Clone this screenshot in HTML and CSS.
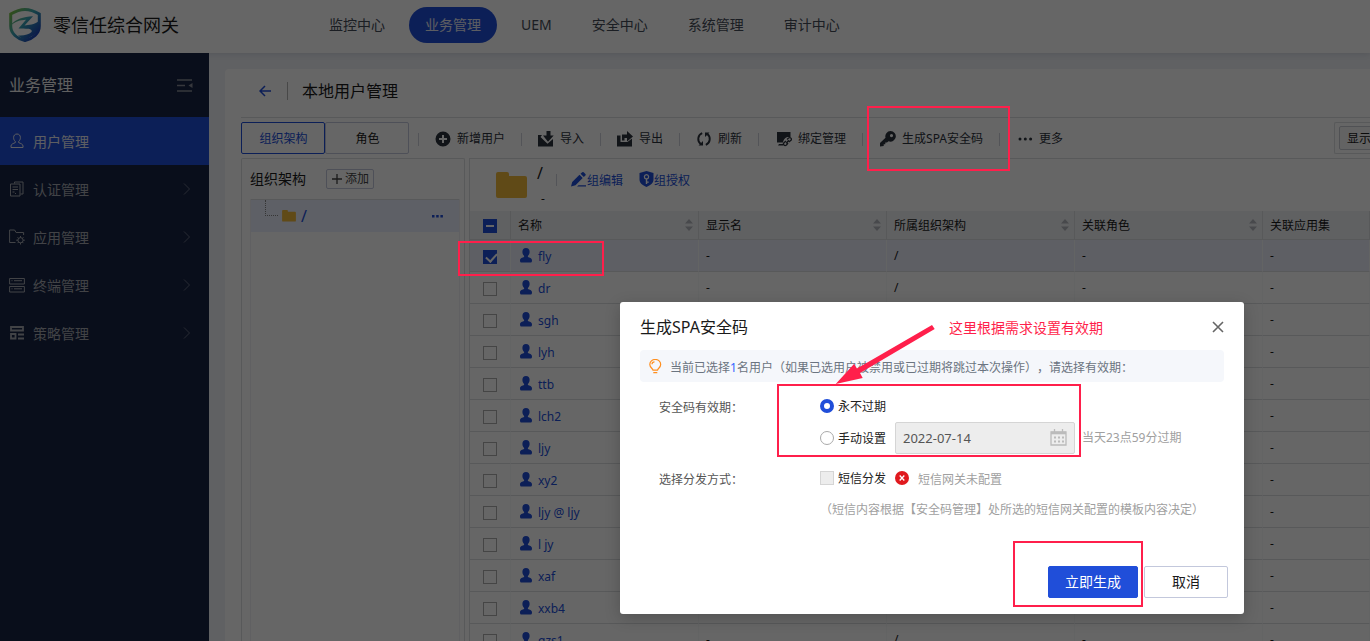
FILE: index.html
```html
<!DOCTYPE html>
<html lang="zh-CN">
<head>
<meta charset="utf-8">
<title>零信任综合网关</title>
<link rel="stylesheet" href="styles.css">
</head>
<body>
<svg class="sprite" aria-hidden="true">
  <symbol id="user" viewBox="0 0 12 15"><path d="M6 0a3.6 3.9 0 0 1 3.6 4c0 1.600-.8 3-1.700 3.900v1.200c1.600.7 4.100 1.200 4.100 3.300 0 1.600-.6 2.200-1.800 2.200H1.800C.6 14.600 0 14 0 12.400c0-2.100 2.500-2.600 4.100-3.300V7.900C3.200 7 2.400 5.600 2.400 4A3.600 3.900 0 0 1 6 0z"/></symbol>
  <symbol id="chev" viewBox="0 0 8 12"><path d="M1 .5 6.500 6 1 11.500" fill="none" stroke="currentColor"/></symbol>
  <symbol id="sort" viewBox="0 0 8 12"><path d="M0 4.500 4 0l4 4.500zM0 7.500h8L4 12z"/></symbol>
  <symbol id="folder" viewBox="0 0 31 27"><path d="M2 0h9q2 0 2 2v2h16q2 0 2 2v18q0 2-2 2H2q-2 0-2-2V2q0-2 2-2z"/></symbol>
</svg>

<div class="app">
  <header class="topbar">
    <svg class="logo" viewBox="0 0 34 36">
      <defs><linearGradient id="lg" gradientUnits="userSpaceOnUse" x1="3" y1="5" x2="29" y2="29"><stop offset="0" stop-color="#7cc243"/><stop offset=".45" stop-color="#3aa6b4"/><stop offset="1" stop-color="#1a3fb8"/></linearGradient></defs>
      <path d="M17 2.500C12 2.500 7 4.500 2.700 7v12c0 7.500 6.500 12.500 14.300 14.500C24.800 31.500 31.300 26.500 31.300 19V7C27 4.500 22 2.500 17 2.500z" fill="#fff" stroke="url(#lg)" stroke-width="3"/>
      <path d="M3 17.500C8 12.300 15 9.500 25 9.200L16.500 18.500C21 18 26 17.800 31 14v8c-2.500 5-8 8.500-14 10.500-3-1-5-2-7-4 6 .5 11-1 13.500-3.500 1-2-1.500-3-3.500-3.200-3-.3-6-.3-9.500-.3L18 12.800C12 13 7 14.500 3 18.500z" fill="url(#lg)"/>
    </svg>
    <h1 class="brand">零信任综合网关</h1>
    <nav class="topnav">
      <a href="#">监控中心</a><a href="#" class="on">业务管理</a><a href="#">UEM</a><a href="#">安全中心</a><a href="#">系统管理</a><a href="#">审计中心</a>
    </nav>
  </header>

  <aside class="side">
    <div class="side-head"><h2>业务管理</h2>
      <button class="plain" aria-label="收起菜单"><svg width="16" height="13" viewBox="0 0 16 13" fill="none" stroke="currentColor" stroke-width="1.400"><path d="M0 1h15M0 6.500h8M0 12h15"/><path d="m15.500 4-4 2.500 4 2.500z" fill="currentColor" stroke="none"/></svg></button>
    </div>
    <nav>
      <a href="#" class="on"><svg viewBox="0 0 16 16"><path d="M8 1C5.800 1 4.600 2.600 4.600 4.500c0 1.700.6 3 1.700 3.900v1.200C4.500 10.500 2 11 2 13v1.500h12V13c0-2-2.500-2.500-4.300-3.400V8.400c1.100-.9 1.700-2.200 1.700-3.900C11.400 2.600 10.200 1 8 1z"/></svg><span>用户管理</span></a>
      <a href="#"><svg viewBox="0 0 16 16"><path d="M5.500 2.500V1H14v12h-2.500M1.500 3h9.500v12H1.500zM3.500 6h5.500M3.500 8.500h5.500M3.500 11h2"/><path d="M6 12.500h1"/></svg><span>认证管理</span><svg class="chev"><use href="#chev"/></svg></a>
      <a href="#"><svg viewBox="0 0 16 16"><path d="M6.500 13.500H.6V1h5l1.500 2.500h7.500V6"/><circle cx="11.500" cy="11.200" r="2.600"/><path d="M11.500 7v1.600M11.500 13.800v1.700M7.200 11.200h1.700M14.100 11.200h1.700M8.600 8.300l1 1M13.400 13.100l1 1M14.400 8.300l-1 1M9.600 13.100l-1 1"/></svg><span>应用管理</span><svg class="chev"><use href="#chev"/></svg></a>
      <a href="#"><svg viewBox="0 0 16 16"><path d="M.6 1.500h14.800v5.500H.6zM.6 9.500h14.800V15H.6zM2.500 3.700h1M5 3.700h8M2.500 11.800h1M5 11.800h8"/></svg><span>终端管理</span><svg class="chev"><use href="#chev"/></svg></a>
      <a href="#"><svg viewBox="0 0 16 16" stroke-width="1.800"><path d="M2 2h12v3.500H2zM2 9h4.500v4.500H2zM9 9.500h6M9 13.500h6"/></svg><span>策略管理</span><svg class="chev"><use href="#chev"/></svg></a>
    </nav>
  </aside>

  <main class="main">
    <section class="card">
      <div class="card-head">
        <button class="plain back" aria-label="返回"><svg width="12" height="12" viewBox="0 0 12 12" fill="none" stroke="currentColor" stroke-width="1.500"><path d="M6 1 1 6l5 5M1 6h11"/></svg></button>
        <h2>本地用户管理</h2>
      </div>
      <div class="bar">
        <div class="tabs"><button class="on">组织架构</button><button>角色</button></div>
        <div class="tools">
          <button><svg viewBox="0 0 16 16"><path fill-rule="evenodd" d="M8 .5a7.500 7.500 0 1 1 0 15 7.500 7.500 0 0 1 0-15zM7 4v3H4v2h3v3h2V9h3V7H9V4z"/></svg>新增用户</button>
          <button><svg viewBox="0 0 16 16"><path d="M0 4h4l-1.500 2L9.500 12.800 15 8v7.500H0z"/><path d="M8.500 0h4v4.500h3.200L10 10.800 5 4.500h3.500z"/></svg>导入</button>
          <button><svg viewBox="0 0 16 16"><path d="M0 4.500h3.500V11h7l4.500-3.500v8H0z"/><path d="M5 9.500V3.500h5V0l6 5.500-6 5V7H7.500v2.500z"/></svg>导出</button>
          <button><svg viewBox="0 0 16 16" fill="none"><g fill="none" stroke="currentColor" stroke-width="1.900"><path d="M6.200 2.200a6.200 6.200 0 0 0-1.500 10.700M9.800 13.800a6.200 6.200 0 0 0 1.500-10.700"/></g><path d="M2.500 14.500h4.500V10zM13.500 1.500H9V6z" fill="currentColor"/></svg>刷新</button>
          <button><svg viewBox="0 0 16 16"><path d="M1 1h13.500v5.300C10 5 7.500 8 7 11.500H1zM3 13h4v1.500H2z"/><path d="M11 8.500 12.500 7c2-1.200 3.600.7 2.500 2.300L12.800 11M12 12l-1.500 2c-2 1.500-4-.6-2.500-2.300L10 10M10.200 12.200l2.600-3" fill="none" stroke="currentColor" stroke-width="1.300"/></svg>绑定管理</button>
          <button><svg viewBox="0 0 16 16"><path fill-rule="evenodd" d="M10.500 0a5.300 5.300 0 1 1-2 10.200L7 11.500H5.300v1.700H3.700V15L0 15.500V12l5.500-5.300A5.300 5.300 0 0 1 10.500 0zm1 3a1.600 1.600 0 1 0 0 3.200 1.600 1.600 0 0 0 0-3.200z"/></svg>生成SPA安全码</button>
          <button><svg viewBox="0 0 16 16"><circle cx="3" cy="8" r="1.500"/><circle cx="8.300" cy="8" r="1.500"/><circle cx="13.600" cy="8" r="1.500"/></svg>更多</button>
        </div>
        <div class="show"><button>显示</button></div>
      </div>
      <div class="split">
        <section class="tree">
          <div class="tree-head"><h3>组织架构</h3><button><svg width="10" height="10" viewBox="0 0 10 10" stroke="currentColor" stroke-width="1.300"><path d="M5 0v10M0 5h10"/></svg>添加</button></div>
          <div class="tree-body"><div class="node"><i></i><svg class="folder small"><use href="#folder"/></svg><a href="#">/</a><button class="plain" aria-label="更多操作"><svg width="11" height="3" viewBox="0 0 11 3" fill="currentColor"><path d="M0 0h2.500v2.500H0zM4.200 0h2.500v2.500H4.200zM8.400 0h2.500v2.500H8.400z"/></svg></button></div></div>
        </section>
        <section class="list">
          <div class="group">
            <svg class="folder"><use href="#folder"/></svg>
            <div class="path"><span>/</span><small>-</small></div>
            <div class="links">
              <a href="#"><svg width="16" height="15" viewBox="0 0 16 15"><path d="M0 14.500 1.200 10 8.500 2.800l3.200 3.200-7.200 7.200zM9.500 1.800 11.200.3q.8-.6 1.500 0l1.700 1.700q.6.700 0 1.500l-1.600 1.500zM6 14.500l1.500-1.300H15v1.300z"/></svg><span>组编辑</span></a>
              <a href="#"><svg width="15" height="16" viewBox="0 0 15 16"><path fill-rule="evenodd" d="M7.500 0 14.500 2v6.500c0 3.500-3 5.700-7 7.500-4-1.800-7-4-7-7.500V2zM7.500 3a2.800 2.800 0 0 0-.7 5.500V13h1.400v-1.200h1.500v-1.300H8.200v-2A2.800 2.800 0 0 0 7.500 3zm0 1.300a1.500 1.500 0 1 1 0 3 1.500 1.500 0 0 1 0-3z"/></svg><span>组授权</span></a>
            </div>
          </div>
          <table>
            <colgroup><col class="c0"><col class="cx"><col class="cx"><col class="cx"><col class="cx"><col></colgroup>
            <thead><tr><th><input type="checkbox" class="some" aria-label="全选"></th><th>名称<svg class="sort"><use href="#sort"/></svg></th><th>显示名<svg class="sort"><use href="#sort"/></svg></th><th>所属组织架构<svg class="sort"><use href="#sort"/></svg></th><th>关联角色<svg class="sort"><use href="#sort"/></svg></th><th>关联应用集</th></tr></thead>
            <tbody>
              <tr class="sel"><td><input type="checkbox" checked aria-label="fly"></td><td><a href="#"><svg><use href="#user"/></svg>fly</a></td><td>-</td><td>/</td><td>-</td><td>-</td></tr>
              <tr><td><input type="checkbox" aria-label="dr"></td><td><a href="#"><svg><use href="#user"/></svg>dr</a></td><td>-</td><td>/</td><td>-</td><td>-</td></tr>
              <tr><td><input type="checkbox" aria-label="sgh"></td><td><a href="#"><svg><use href="#user"/></svg>sgh</a></td><td>-</td><td>/</td><td>-</td><td>-</td></tr>
              <tr><td><input type="checkbox" aria-label="lyh"></td><td><a href="#"><svg><use href="#user"/></svg>lyh</a></td><td>-</td><td>/</td><td>-</td><td>-</td></tr>
              <tr><td><input type="checkbox" aria-label="ttb"></td><td><a href="#"><svg><use href="#user"/></svg>ttb</a></td><td>-</td><td>/</td><td>-</td><td>-</td></tr>
              <tr><td><input type="checkbox" aria-label="lch2"></td><td><a href="#"><svg><use href="#user"/></svg>lch2</a></td><td>-</td><td>/</td><td>-</td><td>-</td></tr>
              <tr><td><input type="checkbox" aria-label="ljy"></td><td><a href="#"><svg><use href="#user"/></svg>ljy</a></td><td>-</td><td>/</td><td>-</td><td>-</td></tr>
              <tr><td><input type="checkbox" aria-label="xy2"></td><td><a href="#"><svg><use href="#user"/></svg>xy2</a></td><td>-</td><td>/</td><td>-</td><td>-</td></tr>
              <tr><td><input type="checkbox" aria-label="ljy @ ljy"></td><td><a href="#"><svg><use href="#user"/></svg>ljy @ ljy</a></td><td>-</td><td>/</td><td>-</td><td>-</td></tr>
              <tr><td><input type="checkbox" aria-label="l jy"></td><td><a href="#"><svg><use href="#user"/></svg>l jy</a></td><td>-</td><td>/</td><td>-</td><td>-</td></tr>
              <tr><td><input type="checkbox" aria-label="xaf"></td><td><a href="#"><svg><use href="#user"/></svg>xaf</a></td><td>-</td><td>/</td><td>-</td><td>-</td></tr>
              <tr><td><input type="checkbox" aria-label="xxb4"></td><td><a href="#"><svg><use href="#user"/></svg>xxb4</a></td><td>-</td><td>/</td><td>-</td><td>-</td></tr>
              <tr><td><input type="checkbox" aria-label="qzs1"></td><td><a href="#"><svg><use href="#user"/></svg>qzs1</a></td><td>-</td><td>/</td><td>-</td><td>-</td></tr>
            </tbody>
          </table>
        </section>
      </div>
    </section>
  </main>
</div>

<div class="mask"></div>

<div class="modal" role="dialog" aria-labelledby="dlg">
  <div class="modal-head"><h2 id="dlg">生成SPA安全码</h2>
    <button class="plain close" aria-label="关闭"><svg width="12" height="12" viewBox="0 0 12 12" stroke="currentColor" stroke-width="1.600"><path d="m1 1 10 10M11 1 1 11"/></svg></button>
  </div>
  <p class="notice"><svg width="13" height="15" viewBox="0 0 13 15" fill="none" stroke="#ff8f1f" stroke-width="1.200"><path d="M4 11.200C3.800 9.500.8 8.500.8 5.500a5.400 5 0 0 1 10.900 0c0 3-3 4-3.200 5.700zM4.300 13.700h4M3 5.300C3 4 4 2.900 5.500 2.900"/></svg><span>当前已选择<b>1</b>名用户（如果已选用户被禁用或已过期将跳过本次操作）<i class="pc">，</i>请选择有效期<i class="pc">：</i></span></p>
  <div class="form">
    <span class="lab">安全码有效期<i class="pc">：</i></span>
    <div class="line"><label><input type="radio" name="exp" checked><span>永不过期</span></label></div>
    <div class="line second"><label><input type="radio" name="exp"><span>手动设置</span></label>
      <span class="date"><input type="text" value="2022-07-14" disabled aria-label="有效期日期"><svg width="17" height="17" viewBox="0 0 17 17" fill="none" stroke="#bbb" stroke-width="1.300"><path d="M1 3h15v13H1zM4.500 0v3M12.500 0v3"/><path d="M1 4h15" stroke-width="2.600"/><path d="M4 8.500h10M4 12.500h10" stroke-width="1.800" stroke-dasharray="2 2"/></svg></span>
      <span class="hint">当天23点59分过期</span></div>
    <span class="lab third">选择分发方式<i class="pc">：</i></span>
    <div class="line third"><label><input type="checkbox" disabled><span>短信分发</span></label><svg class="err" width="14" height="14" viewBox="0 0 14 14"><circle cx="7" cy="7" r="7" fill="#e0191e"/><path d="m4.700 4.500 4.600 5M9.300 4.500l-4.600 5" stroke="#fff" stroke-width="1.300"/></svg><span class="hint">短信网关未配置</span></div>
    <p class="second hint">（短信内容根据【安全码管理】处所选的短信网关配置的模板内容决定）</p>
  </div>
  <div class="foot"><button class="primary">立即生成</button><button>取消</button></div>
</div>

<div class="mark m1"></div><div class="mark m2"></div><div class="mark m3"></div><div class="mark m4"></div>
<svg class="arrow" width="102" height="62" viewBox="0 0 102 62"><path d="M98 1 100.700 5 26 49 28.700 54 1.700 60 20 40 23 44.500z" fill="#ff1f4b"/></svg>
<span class="note">这里根据需求设置有效期</span>
</body>
</html>
```

FILE: styles.css
```css
* { box-sizing: border-box; }
body {
  margin: 0;
  height: 100vh;
  overflow: hidden;
  position: relative;
  font: 12px/20px "Noto Sans", "Noto Sans CJK SC", sans-serif;
  color: #1a1a1a;
  text-spacing-trim: space-all;
}
h1, h2, h3, p { margin: 0; font-weight: 400; }
button, input { font: inherit; color: inherit; margin: 0; }
a { color: inherit; text-decoration: none; }
svg { display: block; flex: none; }
.sprite { position: absolute; width: 0; height: 0; }
.plain { border: 0; background: none; padding: 0; }
.pc { font-family: "Noto Sans CJK TC", sans-serif; font-style: normal; }

.app { height: 100%; display: grid; grid-template: 53px 1fr / 209px 1fr; }
.topbar {
  grid-column: 1 / 3;
  display: flex;
  align-items: center;
  padding: 0 8px 3px;
  background: #fff;
  box-shadow: 0 1px 6px rgba(0, 20, 60, .12);
  z-index: 1;
}
.logo { width: 34px; height: 36px; }
.brand { font-size: 18px; padding-left: 11px; width: 271px; }
.topnav { display: flex; gap: 8px; font-size: 14px; line-height: 36px; color: #444b57; }
.topnav a { padding: 0 16px; border-radius: 18px; }
.topnav .on { background: #204ed9; color: #e6e9f5; }

.side { background: #182545; color: #a5a8b0; z-index: 2; }
.side-head {
  height: 64px;
  display: flex;
  align-items: center;
  justify-content: space-between;
  padding: 0 16px 0 9px;
  color: #f0f0f0;
}
.side-head h2 { font-size: 16px; }
.side-head button { color: #898d98; }
.side nav a { height: 48px; display: flex; align-items: center; gap: 8px; padding: 0 18px 0 9px; font-size: 14px; }
.side nav a.on { background: #204ed9; color: #e8ebf5; }
.side nav svg { width: 16px; height: 16px; fill: none; stroke: currentColor; }
.side nav span { flex: 1; padding-top: 2px; }
.side nav .chev { width: 8px; height: 12px; stroke: none; color: #656c7e; }

.main { background: #eff2f7; padding: 16px 0 0 16px; min-width: 0; overflow: hidden; }
.card {
  height: 100%;
  display: flex;
  flex-direction: column;
  background: #fff;
  border-radius: 4px 0 0 0;
  padding-left: 16px;
}
.card-head { height: 49px; display: flex; align-items: center; padding: 0 0 4px 18px; border-bottom: 1px solid #dcdee2; }
.card-head h2 { font-size: 16px; border-left: 1px solid #b5b5b5; margin-left: 16px; padding-left: 14px; line-height: 18px; }
.back { color: #204ed9; }
.bar { height: 40px; display: flex; align-items: center; overflow: hidden; }
.tabs { display: flex; padding-right: 9px; }
.tabs button { width: 84px; height: 32px; border: 1px solid #c3c8dc; border-radius: 2px; background: #fff; padding: 2px 0 0 1px; }
.tabs .on { border-color: #204ed9; color: #204ed9; }
.tools { display: flex; flex: 1; padding-top: 2px; }
.tools button {
  display: flex;
  align-items: center;
  gap: 6px;
  height: 13px;
  padding: 0 16px;
  border: 0;
  border-left: 1px solid #cfd2dc;
  background: none;
  white-space: nowrap;
  color: #2c323c;
}
.tools button:nth-child(n+5) { padding-left: 17px; }
.tools svg { width: 16px; height: 16px; fill: currentColor; }
.show { width: 36px; height: 32px; padding: 3px 0 0 4px; border: 1px solid #dcdee2; border-right: 0; border-radius: 2px 0 0 2px; overflow: hidden; }
.show button { width: 60px; height: 24px; border: 1px solid #c8cbd3; border-radius: 2px; background: #f7f7f7; padding: 1px 0 0 7px; text-align: left; line-height: 20px; }

.split { flex: 1; min-height: 0; display: grid; grid-template-columns: 224px 1fr; gap: 4px; }
.tree { border: 1px solid #dcdee2; border-bottom: 0; border-radius: 2px 2px 0 0; padding: 0 4px 0 8px; display: flex; flex-direction: column; }
.tree-head { height: 40px; display: flex; align-items: center; gap: 20px; }
.tree-head h3 { font-size: 14px; }
.tree-head button { display: flex; align-items: center; gap: 3px; width: 48px; height: 20px; padding: 0 4px 0 5px; border: 1px solid #c3c8dc; border-radius: 2px; background: #fff; line-height: 18px; white-space: nowrap; color: #444; }
.tree-body { flex: 1; border: solid #f0f1f4; border-width: 0 1px; }
.node { height: 33px; display: flex; align-items: center; padding: 0 16px 0 14px; background: #eaefff; border-top: 1px solid #dcdee2; color: #204ed9; }
.node i { width: 13px; height: 16px; margin: 0 4px 16px 0; border: dotted #888; border-width: 0 0 1px 1px; }
.node a { flex: 1; padding-left: 5px; font-size: 16px; }
.folder { width: 31px; height: 27px; fill: #f0b83a; }
.folder.small { width: 14px; height: 12px; }

.list { border: 1px solid #dcdee2; border-width: 1px 0 0 1px; min-width: 0; overflow: hidden; }
.group { height: 52px; display: flex; padding-left: 26px; }
.group .folder { margin-top: 13px; }
.path { width: 29px; padding: 4px 0 0 10px; display: flex; flex-direction: column; font-size: 16px; }
.path small { font-size: 12px; padding: 6px 0 0 4px; }
.links { display: flex; gap: 16px; height: 12px; margin-top: 15px; padding-left: 14px; border-left: 1px solid #cfd2dc; align-items: center; color: #204ed9; }
.links a { display: flex; align-items: center; }
.links span { padding-top: 2px; }
.links svg { fill: currentColor; margin-bottom: 2px; }
table { width: 100%; border-collapse: separate; border-spacing: 0; table-layout: fixed; }
.c0 { width: 41px; }
.cx { width: 188px; }
th, td { padding: 0 8px 0 7px; text-align: left; font-weight: 400; border-bottom: 1px solid #dcdee2; border-right: 1px solid #f8f9fb; white-space: nowrap; }
th { height: 29px; padding-top: 2px; background: #f1f3f6; border-right-color: #dcdee2; }
td { height: 32px; }
th:first-child, td:first-child { padding: 2px 0 0 13px; }
.sort { float: right; width: 8px; height: 12px; margin: 3px -3px 0 0; fill: #b4b7be; }
.sel td { background: #eaeefb; }
td a { display: flex; align-items: center; gap: 6px; padding: 2px 0 0 2px; color: #204ed9; }
td svg { width: 12px; height: 15px; margin-bottom: 2px; fill: #204ed9; }
input[type=checkbox] { appearance: none; display: block; width: 14px; height: 14px; border: 1px solid #adadad; background: #fff; }
input[type=checkbox]:checked, input.some[type=checkbox] { border-color: #204ed9; background: #204ed9; }
input:checked[type=checkbox]::after { content: ""; display: block; width: 5px; height: 9px; margin: 0 0 0 4px; border: solid #fff; border-width: 0 2px 2px 0; transform: rotate(42deg); }
input.some::after { content: ""; display: block; width: 8px; height: 2px; margin: 5px 2px; background: #fff; }

.mask { position: absolute; inset: 0; background: rgba(0, 0, 0, .6); z-index: 5; }
.modal {
  position: absolute;
  left: 620px;
  top: 302px;
  z-index: 6;
  width: 624px;
  padding: 0 20px 16px;
  border-radius: 3px;
  background: #fff;
  box-shadow: 0 4px 16px rgba(0, 0, 0, .2);
}
.modal-head { height: 48px; display: flex; align-items: center; justify-content: space-between; padding-top: 2px; }
.modal-head h2 { font-size: 16px; }
.close { color: #666; }
.notice { height: 32px; display: flex; align-items: center; gap: 8px; padding: 0 9px; background: #f5f7fb; border-radius: 4px; color: #6b7480; white-space: nowrap; }
.notice span { padding-top: 2px; }
.notice b { font-weight: 400; color: #3366ff; }
.form { display: grid; grid-template-columns: 161px 1fr; padding: 8px 0 0 19px; color: #222; }
.form > * { height: 32px; line-height: 32px; }
.form > .lab { line-height: 34px; color: #555; }
.second { grid-column: 2; }
.form > .third { height: 40px; padding-top: 8px; }
.line { display: flex; align-items: center; white-space: nowrap; }
.line label { display: flex; align-items: center; gap: 4px; width: 75px; line-height: 20px; }
.line label span { padding-top: 2px; }
input[type=radio] { appearance: none; width: 14px; height: 14px; border: 1px solid #aaa; border-radius: 50%; background: #fff; }
input[type=radio]:checked { border: 4px solid #204ed9; }
.form input:disabled { background: #ededed; border-color: #d5d5d5; }
.date { position: relative; }
.date input { display: block; width: 180px; height: 32px; padding: 0 7px; border: 1px solid #d5d5d5; border-radius: 2px; font-size: 13px; color: #555; }
.date svg { position: absolute; right: 8px; top: 7px; }
.hint { color: #a0a0a0; }
.date + .hint { padding-left: 7px; }
.err + .hint { padding: 3px 0 0 9px; line-height: 20px; }
.foot { display: flex; justify-content: flex-end; gap: 6px; margin: 40px -4px 0 0; font-size: 14px; }
.foot button { width: 84px; height: 32px; border: 1px solid #c3c8dc; border-radius: 2px; background: #fff; padding: 0; }
.foot .primary { width: 90px; background: #204ed9; border-color: #204ed9; color: #fff; }

.mark { position: absolute; z-index: 8; border: 2px solid #ff1f4b; }
.m1 { left: 867px; top: 106px; width: 143px; height: 65px; }
.m2 { left: 458px; top: 241px; width: 146px; height: 35px; }
.m3 { left: 777px; top: 384px; width: 304px; height: 73px; }
.m4 { left: 1013px; top: 541px; width: 130px; height: 66px; }
.arrow { position: absolute; left: 834px; top: 324px; z-index: 8; }
.note { position: absolute; left: 949px; top: 318px; z-index: 8; font-size: 14px; color: #ff1f4b; }
```
